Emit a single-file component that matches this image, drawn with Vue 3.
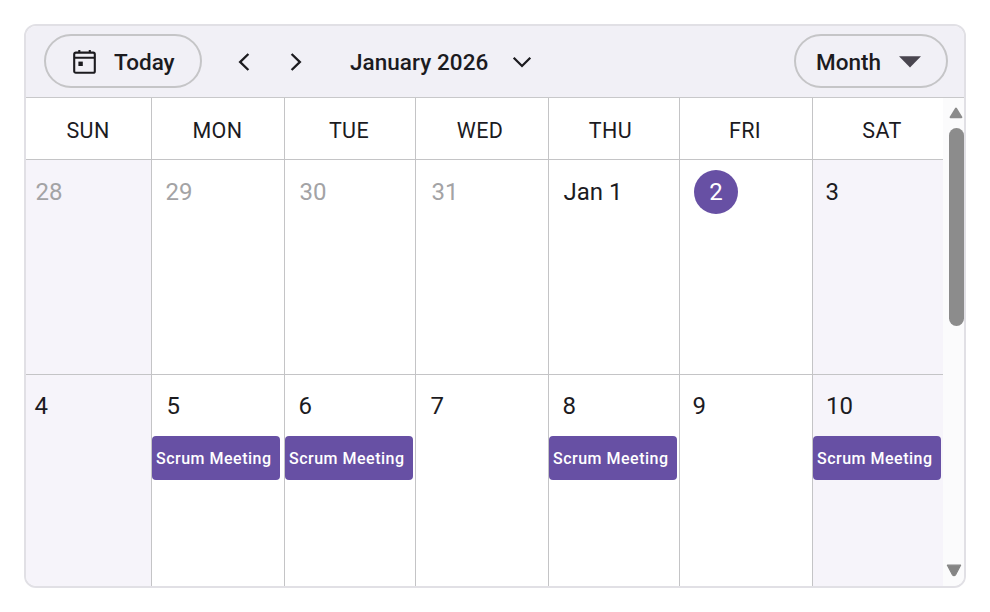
<template>
  <div class="calendar">
    <header class="toolbar">
      <button class="pill today">
        <svg width="24" height="26" viewBox="0 0 24 26" fill="none">
          <rect x="1.2" y="3.6" width="20.6" height="20.2" rx="1.6" stroke="#1c1b1f" stroke-width="2.1"/>
          <path d="M1 8.8H22" stroke="#1c1b1f" stroke-width="2.1"/>
          <path d="M6.3 1V4M16.8 1V4" stroke="#1c1b1f" stroke-width="2.1"/>
          <rect x="5.4" y="12.6" width="4.4" height="4.4" fill="#1c1b1f"/>
        </svg>
        <span class="today-label">Today</span>
      </button>
      <button class="arrow prev">
        <svg width="12" height="20" viewBox="0 0 12 20" fill="none" stroke="#1c1b1f" stroke-width="2.4">
          <path d="M10.4 2L2.2 10L10.4 18"/>
        </svg>
      </button>
      <button class="arrow next">
        <svg width="12" height="20" viewBox="0 0 12 20" fill="none" stroke="#1c1b1f" stroke-width="2.4">
          <path d="M1.6 2L9.8 10L1.6 18"/>
        </svg>
      </button>
      <button class="range">
        <span class="range-label">January 2026</span>
        <svg width="20" height="12" viewBox="0 0 20 12" fill="none" stroke="#1c1b1f" stroke-width="2.3">
          <path d="M1.7 1.8L10 10L18.3 1.8"/>
        </svg>
      </button>
      <button class="pill view">
        <span class="view-label">Month</span>
        <svg width="22" height="12" viewBox="0 0 22 12">
          <path d="M0 0.3H22L11 11.6Z" fill="#49454f"/>
        </svg>
      </button>
    </header>

    <div class="body">
      <div class="grid">
        <div v-for="d in weekdays" :key="d.name" class="head">
          <span :style="{ marginLeft: d.shift + 'px' }">{{ d.name }}</span>
        </div>
        <template v-for="(week, wi) in weeks" :key="wi">
          <div v-for="(day, di) in week" :key="day.label" class="cell"
               :class="{ weekend: di === 0 || di === 6, other: day.other }">
            <div class="date" :class="{ current: day.current }"
                 :style="{ marginLeft: day.indent + 'px' }">{{ day.label }}</div>
            <div v-if="day.event" class="event">{{ day.event }}</div>
          </div>
        </template>
      </div>
      <div class="scrollbar">
        <svg class="up" width="14" height="12" viewBox="0 0 14 12">
          <path d="M7 1.6L12.4 10.2H1.6Z" fill="#8b8b8b" stroke="#8b8b8b" stroke-width="2" stroke-linejoin="round"/>
        </svg>
        <div class="thumb"></div>
        <svg class="down" width="16" height="13" viewBox="0 0 16 13">
          <path d="M1.4 1.2H14.6L9.6 10.8Q8 12.4 6.4 10.8Z" fill="#858585" stroke="#858585" stroke-width="1.2" stroke-linejoin="round"/>
        </svg>
      </div>
    </div>
  </div>
</template>

<script setup>
// shift nudges a weekday name off the column centre
const weekdays = [
  { name: 'SUN', shift: -1 },
  { name: 'MON', shift: -1 },
  { name: 'TUE', shift: -2 },
  { name: 'WED', shift: -4 },
  { name: 'THU', shift: -7 },
  { name: 'FRI', shift: -2 },
  { name: 'SAT', shift: 8 },
]

const weeks = [
  [
    { label: '28', other: true, indent: 9.5 },
    { label: '29', other: true, indent: 13.5 },
    { label: '30', other: true, indent: 14.5 },
    { label: '31', other: true, indent: 15.5 },
    { label: 'Jan 1', indent: 14.5 },
    { label: '2', current: true, indent: 14 },
    { label: '3', indent: 12.5 },
  ],
  [
    { label: '4', indent: 8.5 },
    { label: '5', indent: 14.5, event: 'Scrum Meeting' },
    { label: '6', indent: 13.5, event: 'Scrum Meeting' },
    { label: '7', indent: 14.5 },
    { label: '8', indent: 13.5, event: 'Scrum Meeting' },
    { label: '9', indent: 12.5 },
    { label: '10', indent: 13, event: 'Scrum Meeting' },
  ],
]
</script>

<style>
body { background: #fff; }
</style>

<style scoped>
.calendar {
  box-sizing: border-box;
  width: 942px;
  height: 564px;
  margin: 24px;
  border: 2px solid #e1e0e5;
  border-radius: 12px;
  overflow: hidden;
  display: flex;
  flex-direction: column;
  background: #fff;
  color: #1c1b1f;
  font-family: Roboto, "Liberation Sans", sans-serif;
}
button {
  margin: 0;
  padding: 0;
  border: none;
  background: none;
  color: inherit;
  font: inherit;
  display: flex;
  align-items: center;
}
.toolbar {
  box-sizing: border-box;
  flex: 0 0 72px;
  display: flex;
  align-items: center;
  padding: 0 16px 2px 18px;
  background: #f1f0f6;
  border-bottom: 1px solid #c8c8ca;
  font-size: 22.5px;
  font-weight: 500;
}
.pill {
  box-sizing: border-box;
  height: 54px;
  border: 2px solid #c5c5c7;
  border-radius: 27px;
}
.today-label, .range-label, .view-label { padding-top: 2px; }
.today { width: 158px; padding-left: 26px; }
.today svg { margin: 2px 0 0 1px; }
.today-label { margin-left: 17px; }
.arrow { padding-top: 2px; }
.prev { margin-left: 36px; }
.next { margin-left: 40px; }
.range { margin-left: 48px; }
.range svg { margin: 2px 0 0 24px; }
.range-label { letter-spacing: 0.05px; }
.view { width: 154px; margin-left: auto; padding-left: 20px; }
.view svg { margin: 2px 0 0 18px; }
.body { flex: 1; min-height: 0; display: flex; }
.grid {
  width: 917px;
  display: grid;
  grid-template-columns: 126px 133px 131px 133px 131px 133px 130px;
  grid-template-rows: 62px 215px 1fr;
}
.head, .cell {
  border-right: 1px solid #c4c4c6;
  border-bottom: 1px solid #c4c4c6;
  min-width: 0;
}
.head:nth-child(7n), .cell:nth-child(7n) { border-right: none; }
.cell:nth-child(n + 15) { border-bottom: none; }
.head {
  display: flex;
  align-items: center;
  justify-content: center;
  padding-top: 3px;
  font-size: 21.5px;
  letter-spacing: 0.4px;
}
.cell { padding-top: 10px; }
.cell:nth-child(n + 15) { padding-top: 9px; }
.weekend { background: #f6f4fa; }
.date {
  height: 44px;
  line-height: 44px;
  font-size: 24px;
}
.other .date { color: #a3a3a5; }
.current {
  width: 44px;
  border-radius: 50%;
  background: #6750a4;
  color: #fff;
  text-align: center;
}
.event {
  box-sizing: border-box;
  width: 128px;
  height: 44px;
  margin-top: 8px;
  padding-left: 4px;
  border-radius: 4px;
  background: #6750a4;
  color: #fff;
  font-size: 16px;
  font-weight: 500;
  line-height: 45px;
  letter-spacing: 0.5px;
  white-space: nowrap;
}
.scrollbar {
  flex: 1;
  display: flex;
  flex-direction: column;
  align-items: flex-end;
  background: #fbfbfc;
}
.up { margin: 9px 1px 0 0; }
.thumb {
  width: 15px;
  height: 198px;
  margin-top: 9px;
  border-radius: 8px;
  background: #8c8c8c;
}
.down { margin: auto 2px 9px 0; }
</style>
